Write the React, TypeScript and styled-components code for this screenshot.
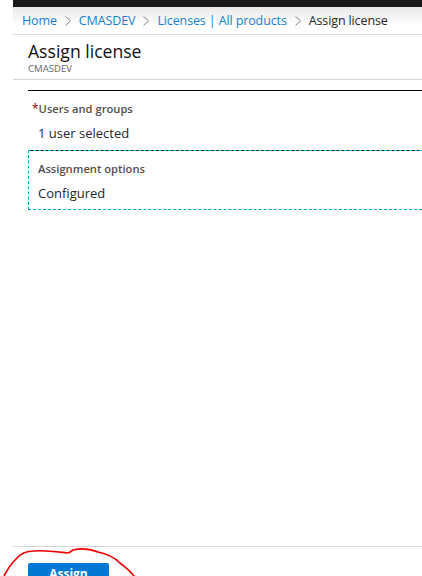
import { createGlobalStyle, styled } from 'styled-components';

const GlobalStyle = createGlobalStyle`
  html, body {
    margin: 0;
    padding: 0;
    background: #fff;
    overflow: hidden;
  }
  body {
    font-family: 'Open Sans', 'Noto Sans', sans-serif;
    color: #1a1a1a;
  }
`;

const Page = styled.div`
  position: relative;
  width: 422px;
  height: 576px;
  overflow: hidden;
  padding-left: 13px;
  box-sizing: border-box;
  display: flex;
  flex-direction: column;
`;

const TopBar = styled.div`
  height: 7px;
  flex: none;
  background: #1a1a1a;
`;

const Breadcrumbs = styled.nav`
  height: 28px;
  flex: none;
  box-sizing: border-box;
  padding-left: 9px;
  display: flex;
  align-items: center;
  gap: 8px;
  font-size: 12.5px;
  letter-spacing: -0.12px;
  background: linear-gradient(#e9e9e9, #fff 70%);
  border-bottom: 1px solid #d6d6d6;
  white-space: nowrap;
`;

const Crumb = styled.a`
  color: #1a7fd0;
`;

const CurrentCrumb = styled.span`
  color: #262626;
`;

const Header = styled.header`
  height: 45px;
  flex: none;
  box-sizing: border-box;
  padding: 5px 0 0 15px;
  border-bottom: 1px solid #d6d6d6;
`;

const Title = styled.h1`
  margin: 0;
  font-size: 17.6px;
  line-height: 23px;
  font-weight: 400;
  color: #111;
`;

const Subtitle = styled.div`
  font-size: 9.6px;
  line-height: 12px;
  color: #666;
`;

const Content = styled.main`
  flex: 1;
  padding: 10px 0 0 15px;
`;

const Section = styled.section<{ $focused?: boolean }>`
  position: relative;
  box-sizing: border-box;
  height: 60px;
  border-top: 1px solid #000;
  padding: ${p => (p.$focused ? '11px 0 0 9px' : '11px 0 0 4px')};
  ${p =>
    p.$focused &&
    `
    border-left: 1px dashed #00a4c8;
    border-bottom: 1px dashed #00a4c8;
    &::before {
      content: '';
      position: absolute;
      left: -1px;
      right: 0;
      top: -1px;
      border-top: 1px dashed #00c0e0;
    }
  `}
`;

const Label = styled.div`
  font-size: 11.2px;
  line-height: 14px;
  font-weight: 600;
  color: #505050;
`;

const Required = styled.span`
  color: #a4262c;
  font-size: 12px;
`;

const Value = styled.div<{ $indented?: boolean }>`
  margin-top: 9px;
  padding-left: ${p => (p.$indented ? '6px' : '0')};
  font-size: 13px;
  line-height: 16px;
  color: #262626;
`;

const Footer = styled.footer`
  height: 30px;
  flex: none;
  box-sizing: border-box;
  padding: 16px 0 0 15px;
  border-top: 1px solid #d6d6d6;
`;

const AssignButton = styled.button`
  display: block;
  width: 81px;
  height: 22px;
  padding: 0;
  border: none;
  border-radius: 2px;
  background: #0078d4;
  color: #fff;
  font-family: inherit;
  font-size: 12px;
  line-height: 14px;
  font-weight: 700;
`;

const Scribble = styled.svg`
  position: absolute;
  left: 0;
  top: 540px;
  width: 140px;
  height: 36px;
  pointer-events: none;
`;

function Chevron() {
  return (
    <svg width="6" height="10" viewBox="0 0 6 10" fill="none">
      <path d="M0.5 0.5L5.5 5L0.5 9.5" stroke="#8a8a8a" strokeWidth="1" />
    </svg>
  );
}

export default function App() {
  return (
    <>
      <GlobalStyle />
      <Page>
        <TopBar />
        <Breadcrumbs>
          <Crumb>Home</Crumb>
          <Chevron />
          <Crumb>CMASDEV</Crumb>
          <Chevron />
          <Crumb>Licenses | All products</Crumb>
          <Chevron />
          <CurrentCrumb>Assign license</CurrentCrumb>
        </Breadcrumbs>
        <Header>
          <Title>Assign license</Title>
          <Subtitle>CMASDEV</Subtitle>
        </Header>
        <Content>
          <Section>
            <Label>
              <Required>*</Required>Users and groups
            </Label>
            <Value $indented>1 user selected</Value>
          </Section>
          <Section $focused>
            <Label>Assignment options</Label>
            <Value>Configured</Value>
          </Section>
        </Content>
        <Footer>
          <AssignButton>Assign</AssignButton>
        </Footer>
        <Scribble viewBox="0 0 140 36" fill="none">
          <path
            d="M4 36C7 30 11 24 16 19C20 14 26 11 34 11C45 10 58 12 67 13C70 13 71 11 73 10C80 8 90 9 98 12C108 14 114 17 120 23C126 28 132 32 135 38"
            stroke="#f00000"
            strokeWidth="1.7"
          />
        </Scribble>
      </Page>
    </>
  );
}
